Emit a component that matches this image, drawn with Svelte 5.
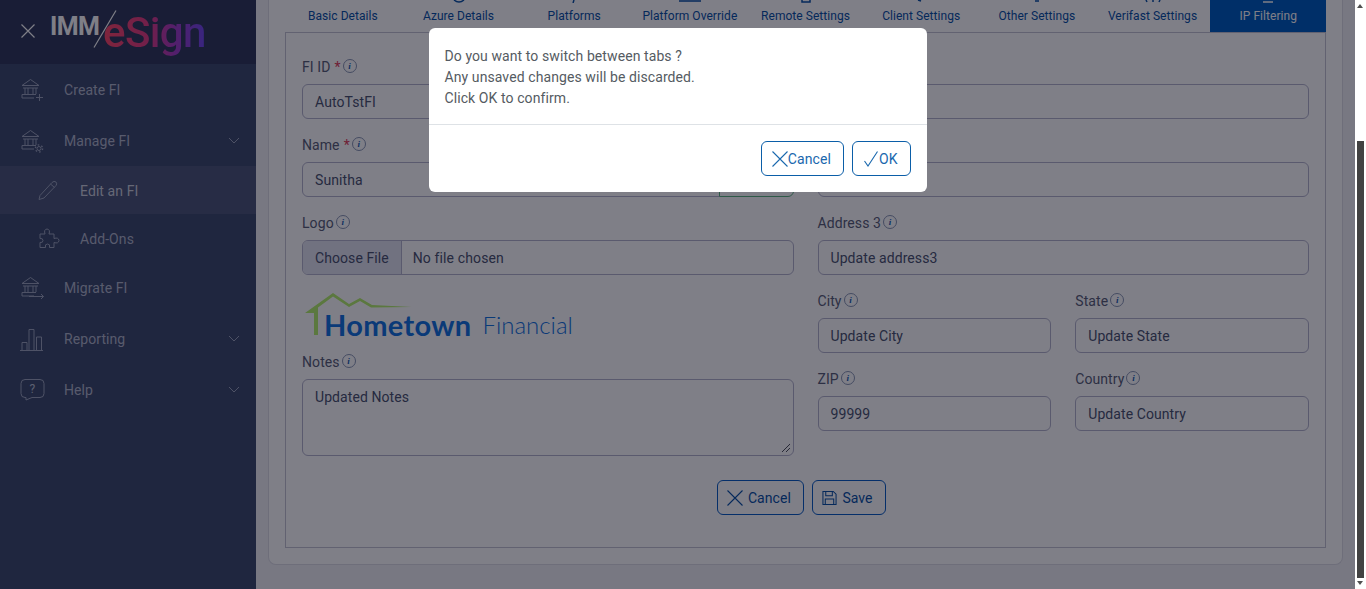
<script lang="ts">
  const bank =
    "M2 7.5 L10.5 1.5 L19 7.5 Z M3 10h15 M5 10v6 M8 10v6 M13 10v6 M16 10v6 M2 16.5h14 M2 16.5v3.5h12";

  const nav = [
    { label: "Create FI", icon: "create" },
    { label: "Manage FI", icon: "manage", chevron: true },
    { label: "Edit an FI", icon: "pencil", sub: true, current: true },
    { label: "Add-Ons", icon: "puzzle", sub: true },
    { label: "Migrate FI", icon: "migrate" },
    { label: "Reporting", icon: "bars", chevron: true },
    { label: "Help", icon: "help", chevron: true },
  ];

  const tabs = [
    { label: "Basic Details", peek: "" },
    { label: "Azure Details", peek: "M7 0 Q12 4 17 0" },
    { label: "Platforms", peek: "M12 0 L11 3" },
    { label: "Platform Override", peek: "M1 1h22" },
    { label: "Remote Settings", peek: "M8 0v2h8V0" },
    { label: "Client Settings", peek: "M9 0 L12 1" },
    { label: "Other Settings", peek: "M10 1h4" },
    { label: "Verifast Settings", peek: "M5 0 L6 2 M19 0 L18 2 M12 0v2" },
    { label: "IP Filtering", peek: "M7 2h10", active: true },
  ];
</script>

{#snippet info()}
  <span class="info">i</span>
{/snippet}

{#snippet field(label, value, required = false)}
  <div class="field">
    <span class="label">{label}{#if required}<em>*</em>{/if}{@render info()}</span>
    <div class="input">{value}</div>
  </div>
{/snippet}

<div class="screen">
  <div class="page">
    <aside class="sidebar">
      <div class="brand">
        <svg class="close" viewBox="0 0 14 14" width="14" height="14">
          <path d="M0.5 0.5 L13.5 13.5 M13.5 0.5 L0.5 13.5" />
        </svg>
        <div class="wordmark">
          <span class="imm">IMM</span>
          <svg class="slash" viewBox="0 0 24 38" width="24" height="38"><path d="M23 0.5 L1 37.5" /></svg>
          <span class="esign">eSign</span>
        </div>
      </div>
      <nav>
        {#each nav as item}
          <div class="item" class:sub={item.sub} class:current={item.current}>
            <svg class="icon" viewBox="0 0 24 24" width="24" height="24">
              {#if item.icon === "create"}
                <path d={bank} /><path d="M16 19.5h7 M19.5 16v7" />
              {:else if item.icon === "manage"}
                <path d={bank} /><circle cx="19" cy="19.5" r="2" /><circle class="teeth" cx="19" cy="19.5" r="3.6" />
              {:else if item.icon === "migrate"}
                <path d={bank} /><path d="M9 20.5h14.5 M21 18 L23.5 20.5 L21 23" />
              {:else if item.icon === "bars"}
                <path d="M0 23.5h23 M2 23.5v-8h5v8 M9 23.5v-21h5v21 M16.5 23.5v-13.500h5v13.500" />
              {:else if item.icon === "help"}
                <path d="M5 1.500h15a4 4 0 0 1 4 4v10a4 4 0 0 1-4 4h-8l-6 2.500 0-2.500h-1a4 4 0 0 1-4-4v-10a4 4 0 0 1 4-4z" />
                <text x="12.500" y="14.500" text-anchor="middle">?</text>
              {:else if item.icon === "pencil"}
                <path d="M3 17.500 L15 4.500 Q17 2.500 19 4 Q20.500 6 19 7.500 L7 20 L2 21.500 Z M13.500 6 L17.500 9.500" />
              {:else if item.icon === "puzzle"}
                <path d="M3 8h5 Q6.500 3.500 10 3 Q13.500 3.500 12 8h5v4.500 Q21.500 11 22 14.500 Q21.500 18 17 16.500v5h-4.500 Q13.500 18 10.500 18 Q7.500 18 8.500 21.500H3v-5 Q6 17 6 14.500 Q6 12 3 12.500z" />
              {/if}
            </svg>
            <span class="name">{item.label}</span>
            {#if item.chevron}
              <svg class="chevron" viewBox="0 0 12 7" width="12" height="7"><path d="M1 1 L6 6 L11 1" /></svg>
            {/if}
          </div>
        {/each}
      </nav>
    </aside>

    <main class="main">
      <div class="card">
        <div class="tabs">
          {#each tabs as tab}
            <div class="tab" class:active={tab.active}>
              <svg class="peek" viewBox="0 0 24 3" width="24" height="3"><path d={tab.peek} /></svg>
              <span>{tab.label}</span>
            </div>
          {/each}
        </div>

        <div class="panel">
          <div class="columns">
            <div class="column">
              {@render field("FI ID", "AutoTstFI", true)}
              <div class="field">
                <span class="label">Name<em>*</em>{@render info()}</span>
                <div class="group">
                  <div class="input">Sunitha</div>
                  <div class="addon"></div>
                </div>
              </div>
              <div class="field">
                <span class="label">Logo{@render info()}</span>
                <div class="input file">
                  <span class="choose">Choose File</span>
                  <span class="chosen">No file chosen</span>
                </div>
              </div>
              <div class="fi-logo">
                <svg viewBox="0 0 110 44" width="110" height="44">
                  <path d="M1 21 L29 1 L45 12 L56 6 L68 13 L108 15 L67 15.500 L56 9 L45 15 L29 4.500 L14 15.500 V43 H10 V21 Z" />
                </svg>
                <span class="hometown">Hometown</span>
                <span class="financial">Financial</span>
              </div>
              <div class="field">
                <span class="label">Notes{@render info()}</span>
                <div class="input notes">
                  Updated Notes
                  <svg class="grip" viewBox="0 0 10 10" width="10" height="10"><path d="M1 9 L9 1 M5 9 L9 5" /></svg>
                </div>
              </div>
            </div>

            <div class="column">
              {@render field("Address 1", "Update addr1")}
              {@render field("Address 2", "Update addr2")}
              {@render field("Address 3", "Update address3")}
              <div class="pair">
                {@render field("City", "Update City")}
                {@render field("State", "Update State")}
              </div>
              <div class="pair">
                {@render field("ZIP", "99999")}
                {@render field("Country", "Update Country")}
              </div>
            </div>
          </div>

          <div class="actions">
            <button class="btn">
              <svg viewBox="0 0 16 16" width="16" height="16"><path d="M0.500 0.500 L15.500 15.500 M15.500 0.500 L0.500 15.500" /></svg>
              Cancel
            </button>
            <button class="btn">
              <svg viewBox="0 0 16 16" width="15" height="16"><path d="M1 1h11l3 3v11H1z M4 1v4.500h7V1 M3.500 15V9h9v6" /></svg>
              Save
            </button>
          </div>
        </div>
      </div>
    </main>

    <div class="backdrop">
      <div class="modal">
        <div class="modal-body">
          Do you want to switch between tabs ?<br />
          Any unsaved changes will be discarded.<br />
          Click OK to confirm.
        </div>
        <div class="modal-footer">
          <button class="modal-btn">
            <svg viewBox="0 0 16 16" width="16" height="16"><path d="M0.500 0.500 L15.500 15.500 M15.500 0.500 L0.500 15.500" /></svg>
            Cancel
          </button>
          <button class="modal-btn">
            <svg viewBox="0 0 16 16" width="16" height="16"><path d="M1.500 10 L5 15 L14.500 0.500" /></svg>
            OK
          </button>
        </div>
      </div>
    </div>
  </div>

  <div class="scrollbar">
    <span class="arrow up"></span>
    <span class="thumb"></span>
    <span class="arrow down"></span>
  </div>
</div>

<style>
  :global(body) {
    margin: 0;
    overflow: hidden;
    font-family: Roboto, "Liberation Sans", sans-serif;
  }

  .screen {
    display: flex;
    height: 589px;
    overflow: hidden;
    background: #fff;
  }

  .page {
    position: relative;
    flex: 1;
    display: flex;
    min-width: 0;
    overflow: hidden;
  }

  /* sidebar */
  .sidebar {
    width: 256px;
    flex: none;
    background: #3f4c6e;
    color: #b0b6ca;
    font-size: 14px;
    letter-spacing: 0.08px;
  }

  .brand {
    height: 64px;
    display: flex;
    align-items: flex-start;
    background: #323a5c;
  }

  .close {
    margin: 24px 0 0 21px;
    flex: none;
  }

  .close path {
    fill: none;
    stroke: #fff;
    stroke-width: 1.2;
  }

  .wordmark {
    display: flex;
    align-items: flex-start;
    margin-left: 15px;
    height: 64px;
    overflow: hidden;
  }

  .imm {
    font-size: 25px;
    font-weight: 700;
    line-height: 25px;
    margin-top: 14px;
    color: #fff;
    width: 50px;
    letter-spacing: -0.6px;
  }

  .slash {
    margin: 10px 0 0 -7px;
    flex: none;
  }

  .slash path {
    fill: none;
    stroke: #fff;
    stroke-width: 1.2;
  }

  .esign {
    margin: 8px 0 0 -14px;
    font-size: 42px;
    line-height: 50px;
    font-weight: 500;
    letter-spacing: -0.6px;
    background: linear-gradient(90deg, #ff4a68 0%, #e23f86 45%, #a63fc8 70%, #6f4bf0 100%);
    -webkit-background-clip: text;
    background-clip: text;
    color: transparent;
  }

  .item {
    display: flex;
    align-items: center;
    height: 51px;
    padding-left: 20px;
    position: relative;
  }

  .item.sub {
    height: 48px;
    padding-left: 37px;
  }

  .sub .icon {
    margin-right: 19px;
  }

  .sub .name {
    padding-top: 2px;
  }

  .item.current {
    background: #4e587a;
    color: #ccd0dc;
  }

  .icon {
    flex: none;
    margin-right: 20px;
    overflow: visible;
  }

  .icon path,
  .icon circle {
    fill: none;
    stroke: #9ca5bd;
    stroke-width: 1;
  }

  .icon .teeth {
    stroke-dasharray: 1.6 2.2;
    stroke-width: 1.4;
  }

  .icon text {
    font-size: 12px;
    fill: #b9c0d2;
    font-family: Roboto, sans-serif;
  }

  .name {
    flex: 1;
  }

  .chevron {
    margin-right: 16px;
  }

  .chevron path {
    fill: none;
    stroke: #9ca5bd;
    stroke-width: 1;
  }

  /* main area */
  .main {
    flex: 1;
    min-width: 0;
    padding: 0 12px;
    background: #f0f0f4;
  }

  .card {
    padding: 0 16px 16px;
    border: 1px solid #dcdce4;
    border-top: 0;
    border-radius: 0 0 8px 8px;
    background: #fff;
  }

  .tabs {
    display: flex;
    height: 32px;
  }

  .tab {
    flex: 1;
    min-width: 0;
    display: flex;
    flex-direction: column;
    align-items: center;
    font-size: 12px;
    line-height: 14px;
    letter-spacing: 0.05px;
    color: #0a52a6;
  }

  .tab.active {
    background: #005ec0;
    color: #fff;
  }

  .peek {
    margin-bottom: 6px;
    flex: none;
  }

  .peek path {
    fill: none;
    stroke: currentColor;
    stroke-width: 1.5;
  }

  .panel {
    border: 1px solid #c4c4d2;
    padding: 23px 16px 32px;
    box-sizing: border-box;
  }

  .columns {
    display: grid;
    grid-template-columns: 1fr 1fr;
    column-gap: 24px;
  }

  .column {
    display: flex;
    flex-direction: column;
    gap: 15px;
    min-width: 0;
  }

  .pair {
    display: grid;
    grid-template-columns: 1fr 1fr;
    column-gap: 24px;
  }

  .label {
    display: flex;
    align-items: center;
    height: 21px;
    margin-bottom: 7px;
    font-size: 14px;
    letter-spacing: 0.08px;
    color: #5a6178;
  }

  .label em {
    font-style: normal;
    color: #e0405a;
    margin-left: 4px;
  }

  .info {
    width: 12px;
    height: 12px;
    margin: -2px 0 0 2px;
    border: 1px solid #8a97b4;
    border-radius: 50%;
    display: flex;
    align-items: center;
    justify-content: center;
    font: italic 700 9px "Liberation Serif", serif;
    color: #1a5cb0;
  }

  .input {
    height: 35px;
    box-sizing: border-box;
    padding: 0 12px;
    display: flex;
    align-items: center;
    border: 1px solid #b4b4cc;
    border-radius: 6px;
    font-size: 14px;
    letter-spacing: 0.08px;
    color: #4c5470;
    min-width: 0;
  }

  .group {
    display: flex;
  }

  .group .input {
    flex: 1;
    border-radius: 6px 0 0 6px;
  }

  .addon {
    width: 75px;
    flex: none;
    box-sizing: border-box;
    border: 1px solid #5fb583;
    border-radius: 0 6px 6px 0;
    margin-left: -1px;
  }

  .file {
    padding: 0;
    overflow: hidden;
  }

  .choose {
    align-self: stretch;
    display: flex;
    align-items: center;
    padding: 0 12px;
    background: #e2e4f0;
    border-right: 1px solid #b4b4cc;
  }

  .chosen {
    margin-left: 11px;
    letter-spacing: 0.12px;
  }

  .fi-logo {
    position: relative;
    height: 46px;
    display: flex;
    align-items: flex-end;
  }

  .fi-logo svg {
    position: absolute;
    left: 2px;
    top: 2px;
  }

  .fi-logo svg path {
    fill: #b6f06e;
  }

  .hometown {
    margin: 0 0 -6px 22px;
    font: 700 29px/34px Lato, sans-serif;
    color: #1474e0;
    letter-spacing: 0.32px;
  }

  .financial {
    margin: 0 0 -6px 11px;
    font: 300 24px/34px Lato, sans-serif;
    color: #1474e0;
  }

  .notes {
    position: relative;
    height: 77px;
    align-items: flex-start;
    padding-top: 9px;
  }

  .grip {
    position: absolute;
    right: 2px;
    bottom: 2px;
  }

  .grip path {
    fill: none;
    stroke: #50525e;
  }

  .actions {
    display: flex;
    justify-content: center;
    margin-top: 24px;
  }

  .btn {
    height: 35px;
    display: flex;
    align-items: center;
    gap: 5px;
    margin-right: 8px;
    padding: 0 12.5px 0 9px;
    background: none;
    border: 1px solid #0a5ec4;
    border-radius: 6px;
    font: 14px Roboto, sans-serif;
    letter-spacing: 0.06px;
    color: #0a52a6;
  }

  .btn svg path {
    fill: none;
    stroke: currentColor;
    stroke-width: 1.1;
  }

  /* confirm dialog */
  .backdrop {
    position: absolute;
    inset: 0;
    display: flex;
    justify-content: center;
    align-items: flex-start;
    padding-top: 28px;
    background: rgba(0, 0, 16, 0.5);
  }

  .modal {
    width: 498px;
    background: #fff;
    border-radius: 6px;
    color: #555b62;
    font-size: 14px;
    line-height: 21px;
    letter-spacing: 0.09px;
  }

  .modal-body {
    padding: 18px 16px 15px;
    border-bottom: 1px solid #dee2e6;
  }

  .modal-footer {
    display: flex;
    justify-content: flex-end;
    gap: 8px;
    padding: 16px;
  }

  .modal-btn {
    height: 35px;
    display: flex;
    align-items: center;
    gap: 0;
    padding: 0 12px 0 10px;
    background: #fff;
    border: 1px solid #0b5ea8;
    border-radius: 6px;
    font: 14px Roboto, sans-serif;
    letter-spacing: 0.08px;
    color: #1a68ae;
  }

  .modal-btn svg path {
    fill: none;
    stroke: currentColor;
    stroke-width: 1.1;
  }

  /* window scrollbar */
  .scrollbar {
    width: 11px;
    flex: none;
    position: relative;
    background: #fff;
  }

  .thumb {
    position: absolute;
    left: 2px;
    width: 7px;
    top: 141px;
    height: 437px;
    background: #424242;
  }

  .arrow {
    position: absolute;
    left: 2px;
    border-left: 3.5px solid transparent;
    border-right: 3.5px solid transparent;
  }

  .arrow.up {
    top: 4px;
    border-bottom: 4px solid #505050;
  }

  .arrow.down {
    bottom: 4px;
    border-top: 4px solid #505050;
  }
</style>
